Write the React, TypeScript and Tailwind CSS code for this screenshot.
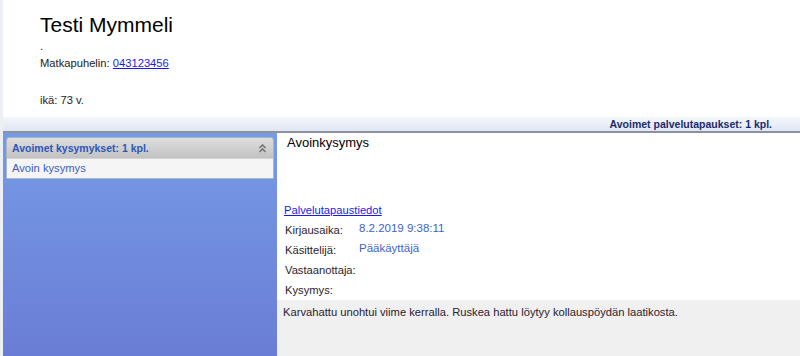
import React from "react";

export default function App() {
  const rows: [string, string][] = [
    ["Kirjausaika:", "8.2.2019 9:38:11"],
    ["Käsittelijä:", "Pääkäyttäjä"],
    ["Vastaanottaja:", ""],
    ["Kysymys:", ""],
  ];
  return (
    <div className="w-[800px] h-[356px] overflow-hidden bg-white border-l-[3px] border-[#eceff3] flex flex-col font-['Liberation_Sans',Arial,sans-serif] text-[#222]">
      {/* top info */}
      <div className="h-[117px] flex flex-col pl-[37px] pt-[13px]">
        <div className="text-[21px] leading-[24px] text-black">Testi Mymmeli</div>
        <div className="mt-[3px] text-[11.2px] leading-[13px]">.</div>
        <div className="mt-[4px] text-[11.2px] leading-[13px]">
          Matkapuhelin: <a href="#" className="text-[#1a1aee] underline">043123456</a>
        </div>
        <div className="mt-[24px] text-[11.2px] leading-[13px]">ikä: 73 v.</div>
      </div>
      {/* header bar */}
      <div className="h-[16px] bg-gradient-to-b from-[#f3f6fb] to-[#dfe7f4] border-b-[2px] border-[#8c919b] flex items-center justify-end pr-[28px]">
        <span className="text-[10.5px] leading-[13px] font-bold text-[#1c2a6b]">Avoimet palvelutapaukset: 1 kpl.</span>
      </div>
      {/* main */}
      <div className="flex-1 flex">
        <div className="w-[274px] bg-gradient-to-b from-[#769be6] to-[#6a7dd6] px-[3px] pt-[4px]">
          <div className="border border-[#aab4c8] rounded-t-[3px] overflow-hidden">
            <div className="h-[20px] bg-gradient-to-b from-[#dedede] to-[#c2c2c2] flex items-center justify-between pl-[5px] pr-[6px]">
              <span className="text-[10.5px] leading-[13px] font-bold text-[#2b57b9]">Avoimet kysymykset: 1 kpl.</span>
              <svg width="9" height="10" viewBox="0 0 9 10" fill="none" stroke="#777" strokeWidth="1.6">
                <path d="M1.5 5 L4.5 2 L7.5 5" />
                <path d="M1.5 9 L4.5 6 L7.5 9" />
              </svg>
            </div>
            <div className="h-[20px] bg-[#f5f5f5] border-t border-[#d4d4d4] flex items-center pl-[5px]">
              <span className="text-[11.2px] leading-[13px] text-[#3a5ec6]">Avoin kysymys</span>
            </div>
          </div>
        </div>
        <div className="flex-1 flex flex-col">
          <div className="h-[67px] pl-[10px] pt-[2px]">
            <div className="text-[13px] leading-[15px] text-black">Avoinkysymys</div>
          </div>
          <div className="h-[20px] flex items-center pl-[7px]">
            <a href="#" className="text-[11.2px] leading-[13px] text-[#1a1aee] underline">Palvelutapaustiedot</a>
          </div>
          {rows.map(([l, v]) => (
            <div key={l} className="h-[20px] flex items-center pl-[8px]">
              <div className="w-[74px] text-[11.2px] leading-[13px] text-[#2a2230]">{l}</div>
              <div className="text-[11.5px] leading-[13px] text-[#3b63cf] pb-[3px]">{v}</div>
            </div>
          ))}
          <div className="flex-1 bg-[#f0f0f0] pl-[6px] pt-[6px]">
            <div className="text-[11.2px] leading-[13px] text-[#2a2230]">
              Karvahattu unohtui viime kerralla. Ruskea hattu löytyy kollauspöydän laatikosta.
            </div>
          </div>
        </div>
      </div>
    </div>
  );
}
